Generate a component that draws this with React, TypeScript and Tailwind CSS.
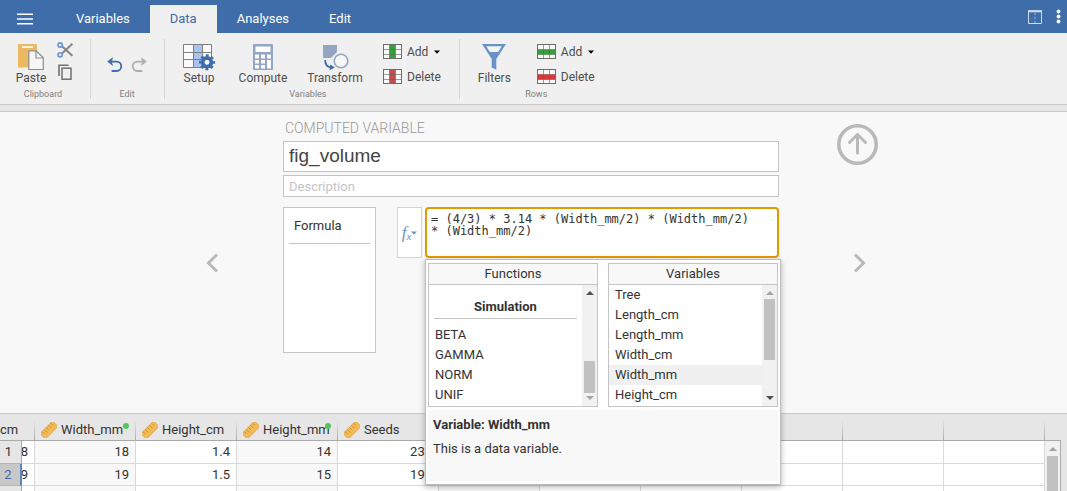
import React from "react";

const functionNames = ["BETA", "GAMMA", "NORM", "UNIF"];
const variableNames = ["Tree", "Length_cm", "Length_mm", "Width_cm", "Width_mm", "Height_cm"];

type Column = { name: string; computed?: boolean };

const columns: Column[] = [
  { name: "Width_mm", computed: true },
  { name: "Height_cm" },
  { name: "Height_mm", computed: true },
  { name: "Seeds" },
  { name: "fig_volume", computed: true },
  { name: "" },
  { name: "" },
  { name: "" },
  { name: "" },
  { name: "" },
];

const rows: string[][] = [
  ["8", "18", "1.4", "14", "238", "3052.08", "", "", "", "", ""],
  ["9", "19", "1.5", "15", "199", "3589.54", "", "", "", "", ""],
  ["6", "21", "1.6", "16", "286", "28778.78", "", "", "", "", ""],
];

function PasteIcon() {
  return (
    <svg width="28" height="28" viewBox="0 0 28 28" fill="none">
      <rect x="1" y="1" width="19" height="23.5" rx="1" fill="#ebb95f" />
      <path d="M5 4H16" stroke="#fff" strokeWidth="1.6" />
      <path d="M11.8 7.8H19.2L26.3 14.8V26.5H11.8Z" fill="#f6f6f6" stroke="#8d8d8d" strokeWidth="1.2" />
      <path d="M19 7.8V15H26.3" stroke="#8d8d8d" strokeWidth="1.2" />
    </svg>
  );
}

function CutIcon() {
  return (
    <svg width="16" height="16" viewBox="0 0 16 16" fill="none">
      <path d="M5 4.3L15.4 13.8M5 11.6L15.4 1.8" stroke="#858585" strokeWidth="2" />
      <circle cx="3.1" cy="3" r="2.1" stroke="#6a93d2" strokeWidth="1.6" />
      <circle cx="3.1" cy="12.8" r="2.1" stroke="#6a93d2" strokeWidth="1.6" />
    </svg>
  );
}

function CopyIcon() {
  return (
    <svg width="14" height="16" viewBox="0 0 14 16" fill="none" stroke="#707070">
      <path d="M1 12V1.2H10.5" strokeWidth="1.6" />
      <rect x="4" y="4.2" width="9" height="11" strokeWidth="1.5" />
    </svg>
  );
}

function UndoIcon({ mirrored = false }: { mirrored?: boolean }) {
  return (
    <svg width="16" height="16" viewBox="0 0 16 16" fill="none">
      <g transform={mirrored ? "translate(16 0) scale(-1 1)" : undefined} stroke={mirrored ? "#adadad" : "#3e6da9"}>
        <path d="M3 4.6H9.6A4.7 4.7 0 0 1 9.6 14H4.6" strokeWidth="1.8" />
        <path d="M5.6 0.8L0.6 4.6L5.6 8.4L4.4 4.6Z" fill={mirrored ? "#adadad" : "#3e6da9"} strokeWidth="0.6" />
      </g>
    </svg>
  );
}

function SetupIcon() {
  return (
    <svg width="34" height="28" viewBox="0 0 34 28" fill="none">
      <rect x="1.5" y="1.5" width="28" height="23" fill="#fafafa" />
      <rect x="11" y="1.5" width="9" height="23" fill="#a9c4f0" />
      <path
        d="M1.5 1.5H29.5V24.5H1.5ZM1.5 9.5H29.5M1.5 16.5H29.5M11.5 1.5V24.5M20.5 1.5V24.5"
        stroke="#7e7e7e"
        strokeWidth="1"
      />
      <circle cx="25" cy="19.3" r="4.2" stroke="#3e6da9" strokeWidth="4" />
      <circle cx="25" cy="19.3" r="6.8" stroke="#3e6da9" strokeWidth="2.4" strokeDasharray="2.9 2.44" strokeDashoffset="1.4" />
      <circle cx="25" cy="19.3" r="2.4" fill="#f4f4f4" />
    </svg>
  );
}

function ComputeIcon() {
  return (
    <svg width="22" height="28" viewBox="0 0 22 28">
      <rect x="1" y="1" width="20" height="26" rx="1" fill="#93a5c3" />
      <g fill="#fff">
        <rect x="3.5" y="3.5" width="15" height="5.5" />
        <rect x="3" y="11.5" width="4" height="4" />
        <rect x="9" y="11.5" width="4" height="4" />
        <rect x="15" y="11.5" width="4" height="4" />
        <rect x="3" y="17" width="4" height="3.5" />
        <rect x="9" y="17" width="4" height="3.5" />
        <rect x="3" y="22" width="4" height="3.5" />
        <rect x="9" y="22" width="4" height="3.5" />
        <rect x="15" y="17" width="4" height="8.5" />
      </g>
    </svg>
  );
}

function TransformIcon() {
  return (
    <svg width="28" height="28" viewBox="0 0 28 28" fill="none">
      <path d="M2 2H16V9L10 15H2Z" fill="#93a5c3" />
      <circle cx="20" cy="18" r="6.8" fill="#f7f7f7" stroke="#93a5c3" strokeWidth="1.6" />
      <path d="M4.2 17C4 21.500 6 23.6 9.500 24.4" stroke="#3e6da9" strokeWidth="1.8" />
      <path d="M9.400 21.400L13.800 24.600L8.600 27.200Z" fill="#3e6da9" />
    </svg>
  );
}

function FilterIcon() {
  return (
    <svg width="26" height="28" viewBox="0 0 26 28">
      <path d="M1 1H25L15.300 16V26.800L10.700 24.500V16Z" fill="#6a92c8" />
      <path d="M5.200 3.200H20.800L17.200 9H8.800Z" fill="#f3f3f3" />
    </svg>
  );
}

function GridIcon({ kind, fill }: { kind: "column" | "row"; fill: string }) {
  return (
    <svg width="19" height="16" viewBox="0 0 19 16" fill="none">
      <rect x="0.5" y="0.5" width="18" height="14" fill="#fafafa" />
      <path d="M0.5 5.5H18.500M0.5 10.500H18.500M6.500 0.500V14.500M12.500 0.500V14.500" stroke="#999" />
      {kind === "column" ? (
        <>
          <rect x="6.5" y="0.5" width="6" height="14" fill={fill} />
          <path d="M6.500 5.500H12.500M6.500 10.500H12.500" stroke="#555" strokeOpacity="0.5" />
        </>
      ) : (
        <>
          <rect x="0.5" y="5.5" width="18" height="5" fill={fill} />
          <path d="M6.500 5.500V10.500M12.500 5.500V10.500" stroke="#555" strokeOpacity="0.5" />
        </>
      )}
      <rect x="0.5" y="0.5" width="18" height="14" stroke="#6d6d6d" />
    </svg>
  );
}

function RulerIcon() {
  return (
    <svg className="shrink-0" width="16" height="16" viewBox="0 0 16 16" fill="none">
      <g transform="rotate(-45 8 8)">
        <rect x="-0.8" y="4.2" width="17.6" height="7.600" rx="0.8" fill="#f2bb57" stroke="#e0a238" strokeWidth="0.9" />
        <path d="M2 4.500V7.500M5 4.500V8.500M8 4.500V7.500M11 4.500V8.500M14 4.500V7.500" stroke="#c98a22" strokeWidth="0.9" />
      </g>
    </svg>
  );
}

function Caret({ className }: { className: string }) {
  return (
    <svg className={className} width="6" height="4" viewBox="0 0 6 4" fill="currentColor">
      <path d="M0 0.500H6L3 3.800Z" />
    </svg>
  );
}

function ScrollArrow({ up = false, active }: { up?: boolean; active: boolean }) {
  return (
    <svg className={active ? "text-[#505050]" : "text-[#a3a3a3]"} width="8" height="4" viewBox="0 0 8 4" fill="currentColor">
      <path d={up ? "M0 4H8L4 0Z" : "M0 0H8L4 4Z"} />
    </svg>
  );
}

function Chevron({ flip = false }: { flip?: boolean }) {
  return (
    <svg width="14" height="20" viewBox="0 0 14 20" fill="none" stroke="#b9b9b9" strokeWidth="3">
      <path d={flip ? "M2 1.500L10.500 10L2 18.500" : "M12 1.500L3.500 10L12 18.500"} />
    </svg>
  );
}

function Tab({ label, selected = false }: { label: string; selected?: boolean }) {
  return (
    <button
      className={
        selected
          ? "mt-[5px] flex items-center bg-[#f0f0f0] px-5 text-[#3e6da9]"
          : "mt-[5px] flex items-center px-5 text-white"
      }
    >
      {label}
    </button>
  );
}

function Group({ label, className, children }: { label: string; className: string; children: React.ReactNode }) {
  return (
    <section className={"flex flex-col items-center " + className}>
      <div className="flex h-[51px]">{children}</div>
      <span className="text-[9px] leading-[9px] text-[#808080]">{label}</span>
    </section>
  );
}

function BigButton({ label, className, children }: { label: string; className: string; children: React.ReactNode }) {
  return (
    <button className={"flex flex-col items-center pt-1 text-xs leading-[14px] " + className}>
      {children}
      {label}
    </button>
  );
}

function GridButtons({ kind, add, remove }: { kind: "column" | "row"; add: string; remove: string }) {
  return (
    <div className="flex flex-col items-start gap-[9px] pt-[5px] text-xs leading-4">
      <button className="flex items-center gap-[5px]">
        <GridIcon kind={kind} fill={add} />
        Add
        <Caret className="ml-px text-black" />
      </button>
      <button className="flex items-center gap-[5px]">
        <GridIcon kind={kind} fill={remove} />
        Delete
      </button>
    </div>
  );
}

function ListPane({ title, bar, children }: { title: string; bar: React.ReactNode; children: React.ReactNode }) {
  return (
    <section className="min-w-0 flex-1 border border-[#c4c4c4]">
      <h3 className="border-b border-[#c4c4c4] bg-[#f8f8f8] text-center leading-5">{title}</h3>
      <div className="flex h-[121px]">
        <div className="min-w-0 flex-1">{children}</div>
        <div className="flex w-[15px] flex-col items-center bg-[#f1f1f1] py-1.5">{bar}</div>
      </div>
    </section>
  );
}

function OptionsPopup() {
  return (
    <div className="absolute top-full left-0 z-10 mt-px w-[356px] border border-[#bdbdbd] bg-white px-0.5 py-[3px] shadow-[0_2px_6px_rgba(0,0,0,0.3)]">
      <div className="flex gap-2.5">
        <ListPane
          title="Functions"
          bar={
            <>
              <ScrollArrow up active />
              <div className="mt-[66px] mb-[3px] w-[11px] flex-1 bg-[#c1c1c1]" />
              <ScrollArrow active={false} />
            </>
          }
        >
          <h4 className="mx-[5px] mb-1.5 border-b border-[#c4c4c4] pt-3 pb-px text-center leading-5 font-bold">Simulation</h4>
          <ul>
            {functionNames.map((name) => (
              <li key={name} className="px-1.5 leading-5">
                {name}
              </li>
            ))}
          </ul>
        </ListPane>
        <ListPane
          title="Variables"
          bar={
            <>
              <ScrollArrow up active={false} />
              <div className="mt-1 mb-9 w-[11px] flex-1 bg-[#c1c1c1]" />
              <ScrollArrow active />
            </>
          }
        >
          <ul>
            {variableNames.map((name) => (
              <li key={name} className={name === "Width_mm" ? "bg-[#f0f0f0] px-1.5 leading-5" : "px-1.5 leading-5"}>
                {name}
              </li>
            ))}
          </ul>
        </ListPane>
      </div>
      <div className="mt-[3px] h-[71px] bg-[#f8f8f8] px-[5px] pt-[5px]">
        <h3 className="leading-5 font-bold">Variable: Width_mm</h3>
        <p className="mt-1 leading-5">This is a data variable.</p>
      </div>
    </div>
  );
}

const headCell =
  "relative h-[27px] border-b border-[#aaa] bg-[linear-gradient(to_bottom,transparent,#aaa)] bg-[length:1px_20px] bg-[position:100%_100%] bg-no-repeat p-0 text-left font-normal";

function DataGrid() {
  return (
    <div className="flex min-h-0 flex-1 overflow-hidden border-t border-[#c9c9c9] bg-[#e6e6e6]">
      <div className="min-w-0 flex-1 overflow-hidden">
        <table className="w-[1045px] table-fixed border-separate border-spacing-0 bg-white">
          <colgroup>
            <col className="w-[22px]" />
            <col className="w-[13px]" />
            {columns.map((_, i) => (
              <col key={i} className="w-[101px]" />
            ))}
          </colgroup>
          <thead className="bg-[#e6e6e6]">
            <tr>
              <th colSpan={2} className={headCell}>
                <span className="block pt-1.5">cm</span>
              </th>
              {columns.map((column, i) => (
                <th key={i} className={headCell}>
                  {column.name && (
                    <span className="flex items-center gap-1 pt-1.5 pl-1.5">
                      <RulerIcon />
                      {column.name}
                    </span>
                  )}
                  {column.computed && <span className="absolute top-[9px] right-[7px] size-1.5 rounded-full bg-[#57c65a]" />}
                </th>
              ))}
            </tr>
          </thead>
          <tbody>
            {rows.map((row, r) => (
              <tr key={r} className={r === 0 ? "h-[23px]" : "h-[22px]"}>
                <th
                  className={
                    r === 1
                      ? "border-r-2 border-b border-r-[#5c86c4] border-b-[#b5b5b5] bg-[#c8c8c8] p-0 pr-1 text-center font-normal text-[#3e6da9]"
                      : "border-r border-b border-r-[#aaa] border-b-[#b5b5b5] bg-[#e6e6e6] p-0 pr-1 text-center font-normal"
                  }
                >
                  {r + 1}
                </th>
                {row.map((value, c) => (
                  <td
                    key={c}
                    className={
                      c > 0 && columns[c - 1].computed
                        ? "overflow-hidden border-r border-b border-[#d9d9d9] bg-[#f8f8f8] p-0 pr-1.5 text-right"
                        : "overflow-hidden border-r border-b border-[#d9d9d9] p-0 pr-1.5 text-right"
                    }
                  >
                    <span className="flex justify-end">{value}</span>
                  </td>
                ))}
              </tr>
            ))}
          </tbody>
        </table>
      </div>
      <div className="mr-1.5 flex w-4 flex-col pt-[26px]">
        <div className="flex flex-1 flex-col items-center border-t border-r border-[#aaa] bg-[#f1f1f1] pt-1.5">
          <ScrollArrow up active={false} />
          <div className="mt-[5px] w-[11px] flex-1 bg-[#c1c1c1]" />
        </div>
      </div>
    </div>
  );
}

export default function App() {
  return (
    <div className="flex h-screen flex-col overflow-hidden bg-[#f8f8f8] font-[Roboto,sans-serif] text-[13px] leading-5 text-[#333]">
      <header className="flex h-[33px] shrink-0 bg-[#3e6da9]">
        <button aria-label="Menu" className="mr-[23px] pt-1 pl-[17px]">
          <svg width="16" height="12" viewBox="0 0 16 12" stroke="#fff" strokeWidth="1.600">
            <path d="M0 1.200H16M0 6H16M0 10.800H16" />
          </svg>
        </button>
        <nav className="flex">
          <Tab label="Variables" />
          <Tab label="Data" selected />
          <Tab label="Analyses" />
          <Tab label="Edit" />
        </nav>
        <div className="ml-auto flex items-center gap-3.5 pr-1.5">
          <button aria-label="Toggle panes">
            <svg width="14" height="14" viewBox="0 0 14 14" fill="none" stroke="#cfdcee">
              <path d="M0.500 1V13.500H13.500V1" />
              <path d="M0 1.200H14" strokeWidth="2.200" />
              <path d="M7 3V13" strokeDasharray="2 2" strokeOpacity="0.7" />
            </svg>
          </button>
          <button aria-label="More options">
            <svg width="5" height="16" viewBox="0 0 5 16" fill="#fff">
              <circle cx="2.500" cy="2.500" r="1.900" />
              <circle cx="2.500" cy="7.500" r="1.900" />
              <circle cx="2.500" cy="12.500" r="1.900" />
            </svg>
          </button>
        </div>
      </header>

      <div className="flex shrink-0 border-b border-[#c9c9c9] bg-[#f0f0f0] pt-1.5 pb-[5px] text-[#4d4d4d]">
        <Group label="Clipboard" className="pr-4 pl-3">
          <BigButton label="Paste" className="w-[38px]">
            <PasteIcon />
          </BigButton>
          <div className="flex w-6 flex-col items-center gap-1.5 pt-[3px] pl-1.5">
            <button aria-label="Cut">
              <CutIcon />
            </button>
            <button aria-label="Copy">
              <CopyIcon />
            </button>
          </div>
        </Group>
        <Group label="Edit" className="border-x border-[#d6d6d6] pr-[17px] pl-4">
          <div className="flex items-center gap-2">
            <button aria-label="Undo">
              <UndoIcon />
            </button>
            <button aria-label="Redo">
              <UndoIcon mirrored />
            </button>
          </div>
        </Group>
        <Group label="Variables" className="pr-[18px] pl-2.5">
          <div className="flex gap-2">
            <BigButton label="Setup" className="w-12">
              <SetupIcon />
            </BigButton>
            <BigButton label="Compute" className="w-16">
              <ComputeIcon />
            </BigButton>
            <BigButton label="Transform" className="w-16">
              <TransformIcon />
            </BigButton>
          </div>
          <div className="pl-4">
            <GridButtons kind="column" add="#37a03c" remove="#c0504d" />
          </div>
        </Group>
        <Group label="Rows" className="border-l border-[#d6d6d6] px-[18px]">
          <BigButton label="Filters" className="mr-[26px]">
            <FilterIcon />
          </BigButton>
          <GridButtons kind="row" add="#37a03c" remove="#d83a3a" />
        </Group>
      </div>
      <div className="h-[7px] shrink-0 border-b border-[#c9c9c9] bg-[#e6e6e6]" />

      <main className="grid shrink-0 grid-cols-[1fr_496px_1fr] pt-1.5 pr-[5px] pb-[60px]">
        <div className="flex items-start justify-end pt-[135px] pr-16">
          <button aria-label="Previous variable">
            <Chevron />
          </button>
        </div>

        <div>
          <h2 className="pl-0.5 text-sm leading-5 font-light text-[#999]">COMPUTED VARIABLE</h2>
          <input
            aria-label="Variable name"
            defaultValue="fig_volume"
            className="mt-[3px] block h-[31px] w-full border border-[#c4c4c4] bg-white px-[5px] pb-0.5 font-['Liberation_Sans',sans-serif] text-[19px] text-[#444] outline-none"
          />
          <input
            aria-label="Description"
            placeholder="Description"
            className="mt-[3px] block h-[22px] w-full border border-[#c4c4c4] bg-white px-[5px] text-[13px] outline-none placeholder:text-[#c4c4c4]"
          />
          <div className="mt-2.5 flex items-start">
            <div className="h-[146px] w-[93px] border border-[#c4c4c4] bg-white px-[5px] pt-2">
              <div className="border-b border-[#c4c4c4] px-[5px] pb-[7px]">Formula</div>
            </div>
            <button
              aria-label="Insert function"
              className="ml-[21px] flex h-[51px] w-[25px] items-center justify-center border border-[#d4d4d4] bg-white text-[#6a92c8]"
            >
              <span className="font-['Liberation_Serif',serif] text-[17px] italic">
                f<sub className="text-[11px]">x</sub>
              </span>
              <Caret className="" />
            </button>
            <div className="relative ml-[3px] flex-1">
              <textarea
                aria-label="Formula"
                defaultValue={"= (4/3) * 3.14 * (Width_mm/2) * (Width_mm/2)\n* (Width_mm/2)"}
                className="block h-[51px] w-full resize-none overflow-hidden rounded border-2 border-[#e29a00] bg-white px-1 py-1 font-['DejaVu_Sans_Mono',monospace] text-xs leading-3 outline-none"
              />
              <OptionsPopup />
            </div>
          </div>
        </div>

        <div className="flex flex-col items-start pt-1.5 pl-[58px]">
          <button aria-label="Close editor">
            <svg width="41" height="41" viewBox="0 0 41 41" fill="none" stroke="#b9b9b9">
              <circle cx="20.500" cy="20.500" r="18.700" strokeWidth="3.600" />
              <path d="M20.500 29V11M12.500 18.500L20.500 10.500L28.500 18.500" strokeWidth="3" strokeLinecap="round" />
            </svg>
          </button>
          <button aria-label="Next variable" className="mt-[88px] pl-4">
            <Chevron flip />
          </button>
        </div>
      </main>

      <DataGrid />
    </div>
  );
}
